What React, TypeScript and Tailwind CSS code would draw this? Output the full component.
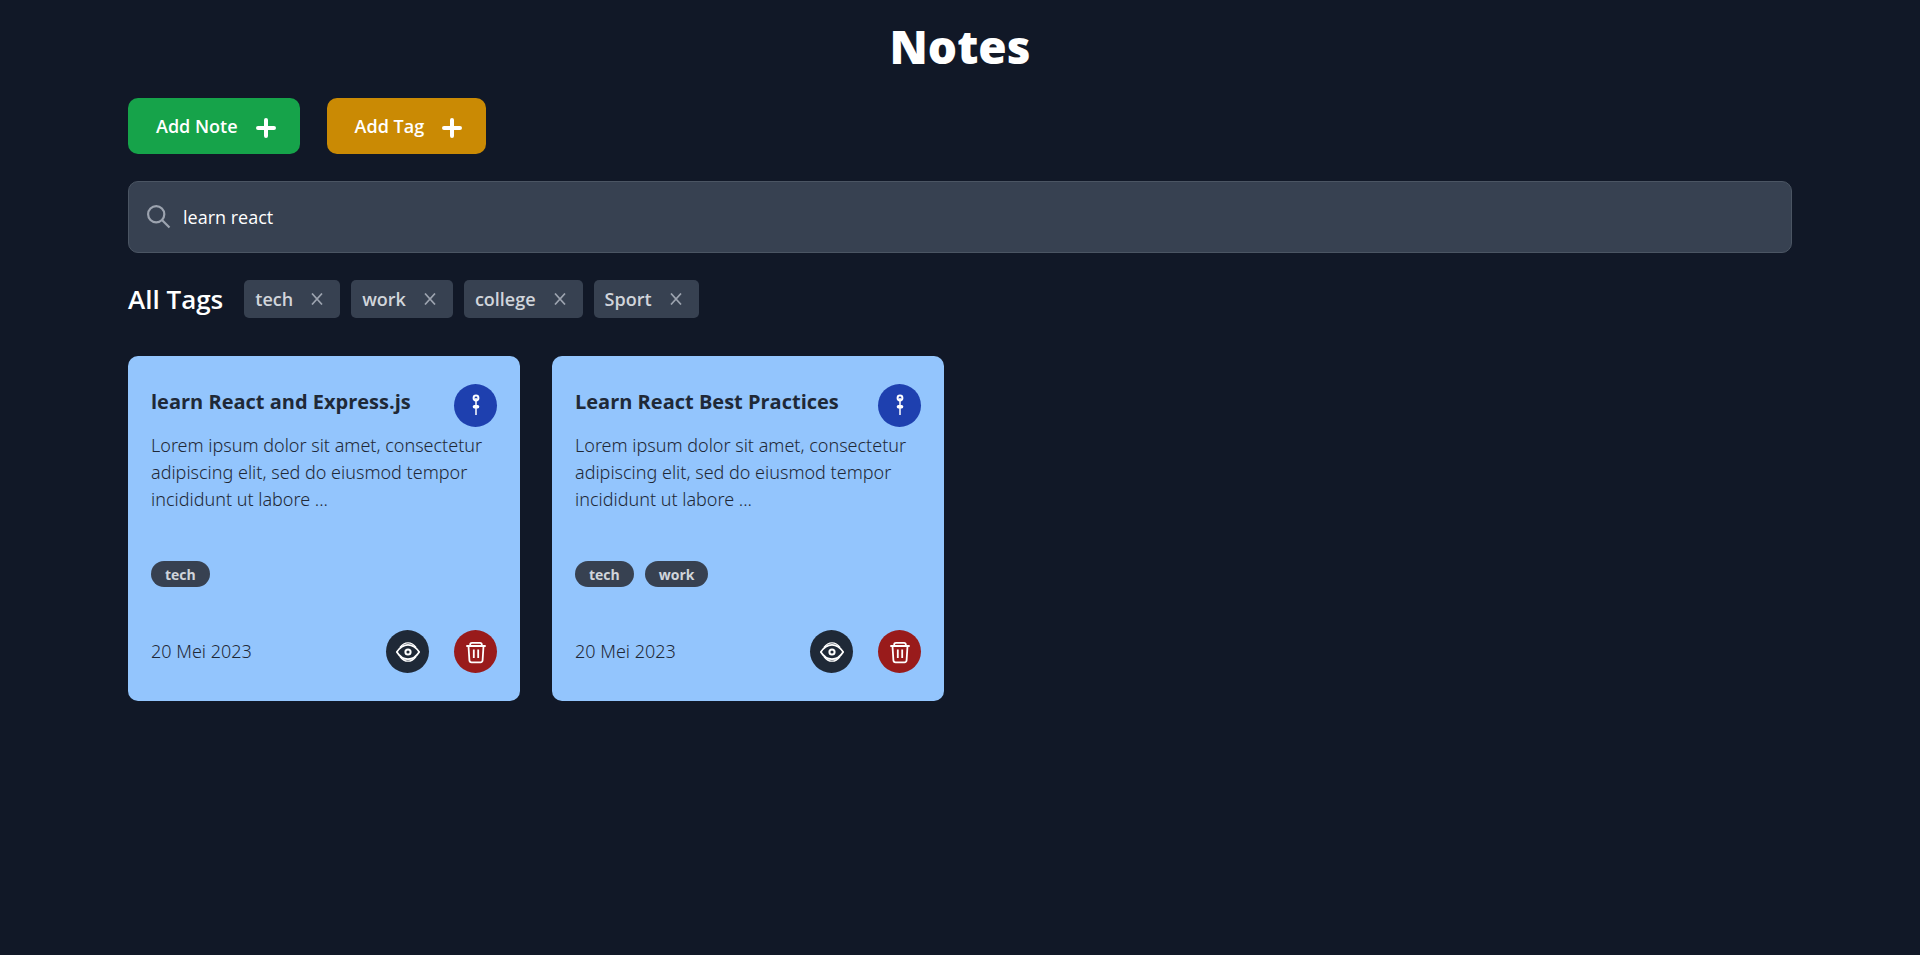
import { useState } from "react";

type Note = { id: number; title: string; body: string; tags: string[]; date: string };

const body =
  "Lorem ipsum dolor sit amet, consectetur adipiscing elit, sed do eiusmod tempor incididunt ut labore ...";

const notes: Note[] = [
  { id: 1, title: "learn React and Express.js", body, tags: ["tech"], date: "20 Mei 2023" },
  { id: 2, title: "Learn React Best Practices", body, tags: ["tech", "work"], date: "20 Mei 2023" },
];

function PlusIcon() {
  return (
    <svg className="mt-1 size-5" viewBox="0 0 20 20" stroke="currentColor" strokeWidth="4" strokeLinecap="round" aria-hidden="true">
      <path d="M10 2v16M2 10h16" />
    </svg>
  );
}

function SearchIcon() {
  return (
    <svg className="size-6 shrink-0 text-[#9ca3af]" viewBox="0 0 24 24" fill="none" stroke="currentColor" strokeWidth="2.2" aria-hidden="true">
      <circle cx="9.2" cy="9.2" r="8.1" />
      <path d="M15 15l7.500 7.500" />
    </svg>
  );
}

function CloseIcon() {
  return (
    <svg className="size-3" viewBox="0 0 12 12" fill="none" stroke="currentColor" strokeWidth="1.7" aria-hidden="true">
      <path d="M1 0.5l10 11M11 0.5L1 11.5" />
    </svg>
  );
}

function PinIcon() {
  return (
    <svg className="size-6" viewBox="0 0 24 24" fill="none" stroke="currentColor" strokeWidth="1.5" aria-hidden="true">
      <circle cx="12" cy="4" r="2.4" strokeWidth="2" />
      <path d="M12 4v17" />
      <path d="M10.4 12.8h3.2" strokeWidth="3.4" strokeLinecap="round" />
    </svg>
  );
}

function EyeIcon() {
  return (
    <svg className="size-6" viewBox="0 0 24 24" fill="none" stroke="currentColor" strokeLinejoin="round" aria-hidden="true">
      <path d="M0.8 12C4 7 7.500 4.800 12 4.800S20 7 23.200 12C20 17 16.500 19.200 12 19.200S4 17 0.800 12z" strokeWidth="1.8" />
      <path d="M4 7.500C6.500 4 9.500 2.800 12 2.800S17.500 4 20 7.500M4 16.500C6.500 20 9.500 21.200 12 21.200S17.500 20 20 16.500" strokeWidth="1.3" />
      <circle cx="12" cy="12" r="2.6" strokeWidth="2" />
    </svg>
  );
}

function TrashIcon() {
  return (
    <svg className="size-6" viewBox="0 0 24 24" fill="none" stroke="currentColor" strokeWidth="1.8" strokeLinejoin="round" aria-hidden="true">
      <path d="M2.300 6h19.400M6.200 5.500v-1c0-1 .8-1.700 1.800-1.700h8c1 0 1.800.7 1.800 1.700v1M4.500 6l.9 14.300c.1 1.200 1 2 2.100 2h9c1.100 0 2-.8 2.100-2L19.500 6M9.800 9.500v8.500M14.200 9.500v8.500" />
    </svg>
  );
}

function NoteCard({ note }: { note: Note }) {
  const round = "flex size-[43px] shrink-0 items-center justify-center rounded-full text-white";
  return (
    <article className="flex flex-col rounded-[10px] bg-[#93c5fd] px-[23px] py-7 text-[#1f2937]">
      <div className="flex items-start justify-between">
        <h2 className="pt-1 text-[20px] leading-7 font-bold">{note.title}</h2>
        <button type="button" aria-label="Pin note" className={`${round} bg-[#1e40af]`}>
          <PinIcon />
        </button>
      </div>
      <p className="mt-[5px] font-['Noto_Sans',sans-serif] text-[18px] leading-[27px] font-light">{note.body}</p>
      <ul className="mt-12 flex gap-[11px]">
        {note.tags.map((tag) => (
          <li key={tag} className="rounded-full bg-[#374151] px-[14px] pt-0.5 text-[14px] leading-6 font-bold text-[#d1d5db]">
            {tag}
          </li>
        ))}
      </ul>
      <div className="mt-[43px] flex items-center">
        <time dateTime="2023-05-20" className="mr-auto font-['Noto_Sans',sans-serif] text-[18px] leading-[27px] font-light">
          {note.date}
        </time>
        <button type="button" aria-label="View note" className={`${round} mr-[25px] bg-[#1f2937]`}>
          <EyeIcon />
        </button>
        <button type="button" aria-label="Delete note" className={`${round} bg-[#991b1b]`}>
          <TrashIcon />
        </button>
      </div>
    </article>
  );
}

export default function App() {
  const [query, setQuery] = useState("learn react");
  const [tags, setTags] = useState(["tech", "work", "college", "Sport"]);

  return (
    <main className="min-h-screen bg-[#111827] px-32 pt-[19px] pb-8 font-['Open_Sans','Noto_Sans',sans-serif] text-white">
      <h1 className="text-center text-[46px] leading-[54px] font-extrabold">Notes</h1>
      <div className="mt-[25px] flex gap-[27px]">
        <button type="button" className="flex h-14 items-center gap-[18px] rounded-[10px] bg-[#16a34a] pr-6 pl-7 text-[18px] font-semibold">
          Add Note
          <PlusIcon />
        </button>
        <button type="button" className="flex h-14 items-center gap-[18px] rounded-[10px] bg-[#ca8a04] pr-6 pl-7 text-[18px] font-semibold">
          Add Tag
          <PlusIcon />
        </button>
      </div>
      <label className="mt-[27px] flex h-[72px] items-center gap-3 rounded-[10px] border border-[#4b5563] bg-[#374151] px-[18px]">
        <SearchIcon />
        <input
          type="search"
          aria-label="Search notes"
          value={query}
          onChange={(e) => setQuery(e.target.value)}
          className="w-full appearance-none bg-transparent text-[18px] outline-none"
        />
      </label>
      <section className="mt-[27px] flex items-center gap-[11px]">
        <h2 className="mr-[10px] text-[26px] leading-8 font-semibold">All Tags</h2>
        {tags.map((tag) => (
          <span key={tag} className="flex h-[38px] items-center gap-[18px] rounded-[5px] bg-[#374151] pr-[17px] pl-[11px] text-[18px] font-semibold text-[#d1d5db]">
            {tag}
            <button type="button" aria-label={`Remove ${tag}`} className="text-[#9ca3af]" onClick={() => setTags(tags.filter((t) => t !== tag))}>
              <CloseIcon />
            </button>
          </span>
        ))}
      </section>
      <section className="mt-[38px] grid gap-8 sm:grid-cols-2 xl:grid-cols-4">
        {notes.map((note) => (
          <NoteCard key={note.id} note={note} />
        ))}
      </section>
    </main>
  );
}
